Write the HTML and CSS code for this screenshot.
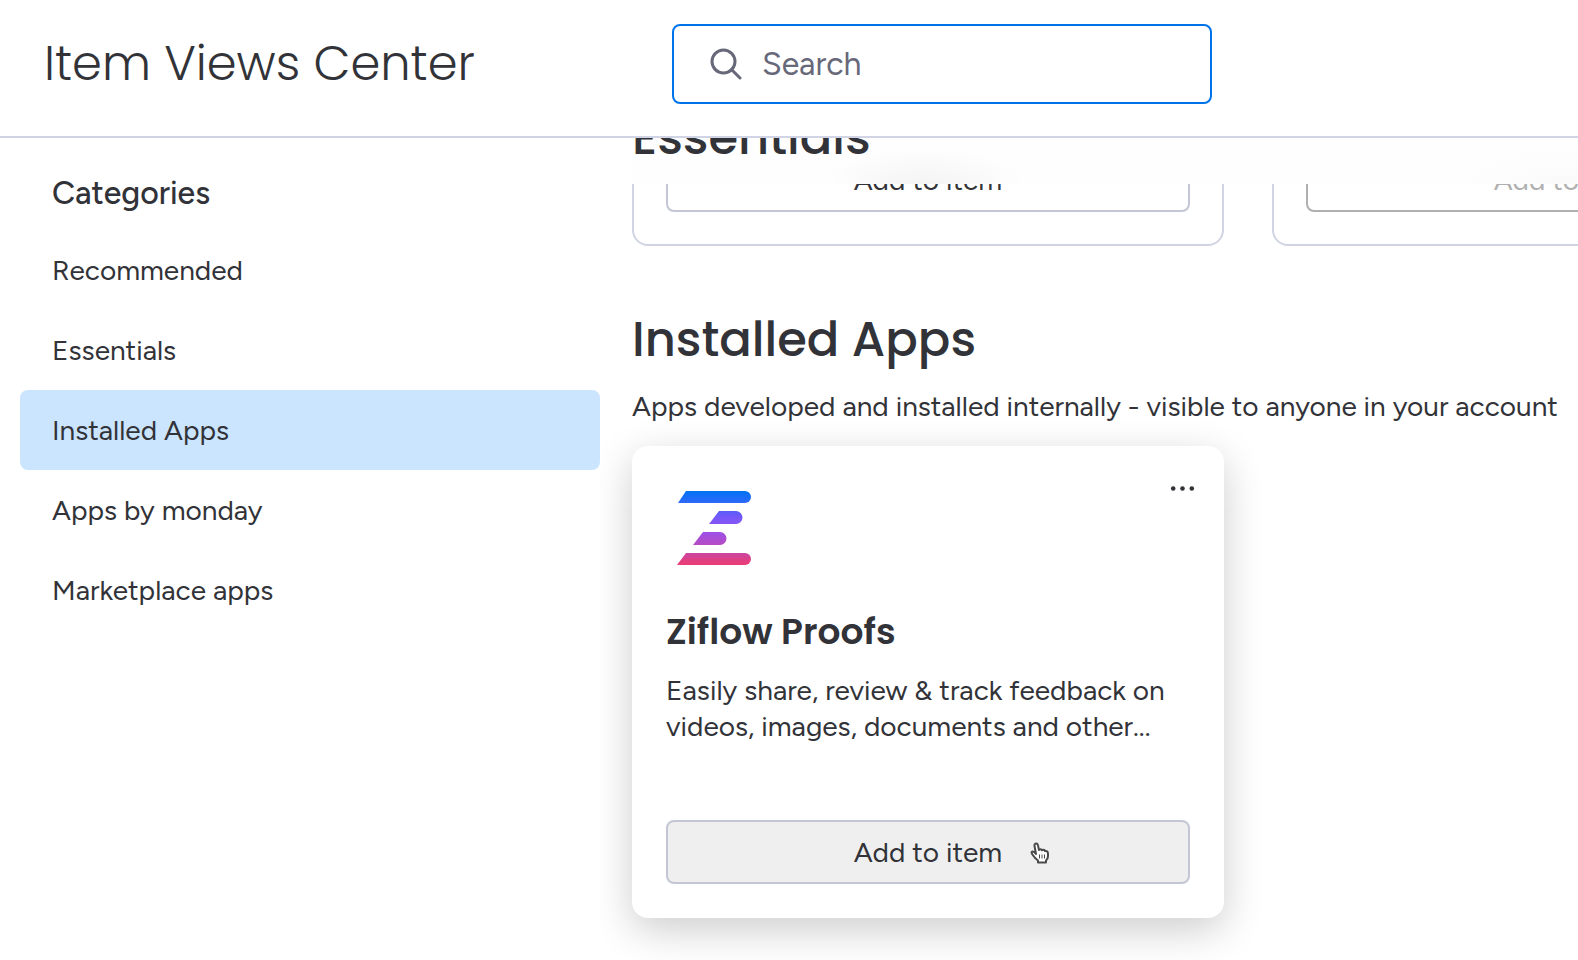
FILE: index.html
```html
<!DOCTYPE html>
<html lang="en">
<head>
    <meta charset="UTF-8">
    <meta name="viewport" content="width=device-width, initial-scale=1.0">
    <title>Item Views Center</title>
    <link rel="stylesheet" href="styles.css">
</head>
<body>
    <header class="header">
        <h1 class="header-title">Item Views Center</h1>
        <label class="search">
            <svg class="search-icon" viewBox="0 0 32 32" aria-hidden="true">
                <circle cx="13.5" cy="13.5" r="11.5"/>
                <path d="M21.5 21.5 L30 30"/>
            </svg>
            <input class="search-input" type="search" placeholder="Search" aria-label="Search">
        </label>
    </header>

    <div class="layout">
        <nav class="sidebar">
            <h2 class="sidebar-title">Categories</h2>
            <a class="category" href="#recommended">Recommended</a>
            <a class="category" href="#essentials">Essentials</a>
            <a class="category active" href="#installed">Installed Apps</a>
            <a class="category" href="#monday">Apps by monday</a>
            <a class="category" href="#marketplace">Marketplace apps</a>
        </nav>

        <main class="content">
            <section class="scrolled" id="essentials">
                <div class="sticky-title">
                    <h2 class="section-title">Essentials</h2>
                </div>
                <div class="cards">
                    <article class="card">
                        <button class="add-button">Add to item</button>
                    </article>
                    <article class="card">
                        <button class="add-button" disabled>Add to item</button>
                    </article>
                </div>
            </section>

            <section class="section" id="installed">
                <h2 class="section-title">Installed Apps</h2>
                <p class="section-text">Apps developed and installed internally - visible to anyone in your account</p>
                <div class="cards">
                    <article class="card raised">
                        <div class="card-top">
                            <svg class="logo" viewBox="0 0 96 96" aria-hidden="true">
                                <defs>
                                    <linearGradient id="ziflow" gradientUnits="userSpaceOnUse" x1="0" y1="11" x2="0" y2="85">
                                        <stop offset="0" stop-color="#0073f7"/>
                                        <stop offset="0.16" stop-color="#2f68f8"/>
                                        <stop offset="0.35" stop-color="#7458fa"/>
                                        <stop offset="0.55" stop-color="#9c50ea"/>
                                        <stop offset="0.75" stop-color="#b84bbd"/>
                                        <stop offset="1" stop-color="#ec3c70"/>
                                    </linearGradient>
                                </defs>
                                <g fill="url(#ziflow)">
                                    <path d="M20 11 H79 A6 6 0 0 1 79 23 H12 Z"/>
                                    <path d="M53 31 H70 A6.5 6.5 0 0 1 70 44 H43 Z"/>
                                    <path d="M37 52 H54 A6.5 6.5 0 0 1 54 65 H27 Z"/>
                                    <path d="M20 73 H79 A6 6 0 0 1 79 85 H11 Z"/>
                                </g>
                            </svg>
                            <button class="menu-button" aria-label="More options">
                                <svg viewBox="0 0 32 32" aria-hidden="true">
                                    <circle cx="7.2" cy="16.5" r="2.3"/>
                                    <circle cx="16.5" cy="16.5" r="2.3"/>
                                    <circle cx="25.8" cy="16.5" r="2.3"/>
                                </svg>
                            </button>
                        </div>
                        <h3 class="card-title">Ziflow Proofs</h3>
                        <p class="card-text">Easily share, review &amp; track feedback on videos, images, documents and other...</p>
                        <button class="add-button hovered">Add to item
                            <svg class="pointer" viewBox="0 0 20 22" aria-hidden="true">
                                <path d="M6 12 L4.5 4 Q4.2 1.6 6 1.4 Q7.6 1.2 8 3.5 L9 8 Q11 6.5 12 8.3 Q14 7 15 9 Q18 8.5 18 12 V14 Q18 17 16 18.5 V20.5 H8 V18.5 Q5 16.5 2.8 13 Q0.5 10 2.5 9.5 Q4 9.3 6 12 Z"/>
                                <path class="fingers" d="M9.5 12.5 V16.5 M12 12.5 V16.5 M14.5 12.5 V16.5"/>
                            </svg>
                        </button>
                    </article>
                </div>
            </section>
        </main>
    </div>
</body>
</html>
```
FILE: styles.css
```css
* {
    box-sizing: border-box;
}
body {
    margin: 0;
    height: 100vh;
    display: flex;
    flex-direction: column;
    overflow: hidden;
    background: #ffffff;
    color: #323338;
    font-family: Figtree, Inter, sans-serif;
    font-size: 28px;
    line-height: 36px;
}
h1, h2, h3, p {
    margin: 0;
}
button, input {
    font: inherit;
    color: inherit;
}
.header {
    display: flex;
    align-items: center;
    padding: 24px 0 32px 44px;
    border-bottom: 2px solid #d0d4e4;
}
.header-title {
    flex: 0 0 628px;
    font-family: Poppins, Inter, sans-serif;
    font-size: 48px;
    font-weight: 300;
    line-height: 64px;
}
.search {
    flex: 0 1 540px;
    display: flex;
    align-items: center;
    gap: 20px;
    height: 80px;
    padding: 0 36px;
    border: 2px solid #0073ea;
    border-radius: 8px;
    color: #676879;
}
.search-icon {
    flex: none;
    width: 32px;
    height: 32px;
    fill: none;
    stroke: #676879;
    stroke-width: 3;
    stroke-linecap: round;
}
.search-input {
    flex: 1;
    min-width: 0;
    padding: 0;
    border: none;
    outline: none;
    background: none;
    font-size: 32px;
}
.search-input::placeholder {
    color: #676879;
    opacity: 1;
}
.layout {
    flex: 1;
    min-height: 0;
    display: flex;
}
.sidebar {
    flex: 0 0 600px;
    padding: 32px 0 0 20px;
}
.sidebar-title {
    margin-bottom: 14px;
    padding: 0 32px;
    font-size: 32px;
    font-weight: 500;
    line-height: 46px;
}
.category {
    display: block;
    padding: 22px 32px;
    border-radius: 8px;
    color: inherit;
    text-decoration: none;
}
.category.active {
    background: #cce5ff;
}
.content {
    flex: 1;
    min-width: 0;
    padding-left: 32px;
    overflow: hidden;
}
/* first group is mostly scrolled away under its own title */
.scrolled {
    position: relative;
    display: flex;
    align-items: flex-end;
    height: 108px;
    overflow: hidden;
}
.sticky-title {
    position: absolute;
    inset: 0 0 auto;
    z-index: 1;
    display: flex;
    align-items: flex-end;
    height: 46px;
    padding-bottom: 18px;
    overflow: hidden;
    background:
        radial-gradient(ellipse 100px 36px at 292px 46px, #f4f4f4, rgba(244, 244, 244, 0)),
        radial-gradient(ellipse 100px 36px at 932px 46px, #fafafa, rgba(250, 250, 250, 0)),
        #fefefe;
}
.sticky-title .section-title {
    line-height: 56px;
}
.section {
    padding-top: 64px;
}
.section-title {
    font-family: Poppins, Inter, sans-serif;
    font-size: 48px;
    font-weight: 500;
    line-height: 60px;
}
.section-text {
    margin: 18px 0 22px;
    white-space: nowrap;
}
.cards {
    display: flex;
    gap: 48px;
}
.card {
    flex: 0 0 592px;
    padding: 32px;
    border: 2px solid #d0d4e4;
    border-radius: 16px;
    background: #ffffff;
}
.card.raised {
    border-color: #ffffff;
    box-shadow: 0 12px 40px rgba(0, 0, 0, 0.2);
}
.card-top {
    display: flex;
    justify-content: space-between;
    align-items: flex-start;
    margin-bottom: 32px;
}
.logo {
    width: 96px;
    height: 96px;
}
.menu-button {
    display: flex;
    margin: -8px -8px 0 0;
    padding: 0;
    border: none;
    background: none;
    cursor: pointer;
}
.menu-button svg {
    width: 32px;
    height: 32px;
    fill: #323338;
}
.card-title {
    margin-bottom: 16px;
    font-family: Poppins, Inter, sans-serif;
    font-size: 36px;
    font-weight: 600;
    line-height: 48px;
}
.card-text {
    height: 80px;
    margin-bottom: 68px;
}
.add-button {
    position: relative;
    display: block;
    width: 100%;
    height: 64px;
    padding: 0;
    border: 2px solid #c3c6d4;
    border-radius: 8px;
    background: none;
    cursor: pointer;
}
.add-button:disabled {
    border-color: #b0b0b0;
    color: #b0b0b0;
}
.add-button.hovered {
    background: #efefef;
}
.pointer {
    position: absolute;
    top: 20px;
    right: 138px;
    width: 20px;
    height: 22px;
    fill: #ffffff;
    stroke: #4a4a4a;
    stroke-width: 2;
    stroke-linejoin: round;
}
.pointer .fingers {
    stroke-width: 1;
}
```
